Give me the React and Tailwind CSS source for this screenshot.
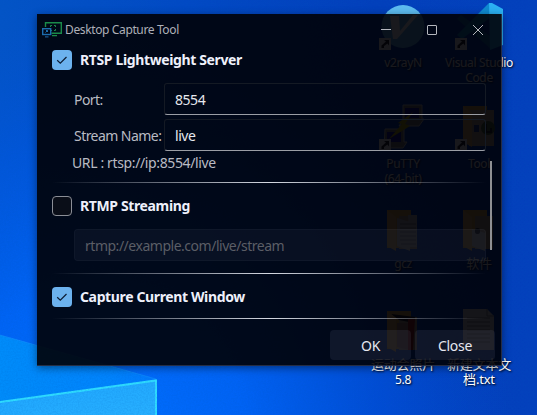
import React, { useState } from "react";

function Wallpaper() {
  return (
    <svg className="absolute inset-0" width="537" height="415" viewBox="0 0 537 415">
      <defs>
        <linearGradient id="sky" x1="0" y1="0" x2="1" y2="0">
          <stop offset="0" stopColor="#0454c6" />
          <stop offset="0.35" stopColor="#0249c4" />
          <stop offset="0.7" stopColor="#033fbb" />
          <stop offset="1" stopColor="#0440bc" />
        </linearGradient>
        <radialGradient id="glow" gradientUnits="userSpaceOnUse" cx="100" cy="430" r="410">
          <stop offset="0" stopColor="#0070ff" />
          <stop offset="0.35" stopColor="#0066fa" stopOpacity="0.9" />
          <stop offset="0.7" stopColor="#0058ea" stopOpacity="0.5" />
          <stop offset="1" stopColor="#0050dc" stopOpacity="0" />
        </radialGradient>
        <linearGradient id="pane" x1="0" y1="0" x2="1" y2="1">
          <stop offset="0" stopColor="#1ea6ff" />
          <stop offset="1" stopColor="#28b0ff" />
        </linearGradient>
        <linearGradient id="beam" gradientUnits="userSpaceOnUse" x1="0" y1="0" x2="180" y2="0">
          <stop offset="0" stopColor="#008cfa" />
          <stop offset="0.6" stopColor="#0084fd" />
          <stop offset="1" stopColor="#0074ff" />
        </linearGradient>
        <filter id="grain" x="0" y="0" width="100%" height="100%">
          <feTurbulence type="fractalNoise" baseFrequency="0.6" numOctaves="2" />
          <feColorMatrix values="0 0 0 0 0  0 0 0 0 0.1  0 0 0 0 0.5  0.6 0 0 0 -0.200" />
        </filter>
      </defs>
      <rect width="537" height="415" fill="url(#sky)" />
      <rect width="537" height="415" fill="url(#glow)" />
      <path d="M0 335 L156 379 V415 H0 Z" fill="url(#beam)" />
      <path d="M0 335 L156 379" stroke="#1492ff" strokeOpacity="0.6" strokeWidth="1" />
      <path d="M0 402 L157 380 V415 H0 Z" fill="url(#pane)" />
      <path d="M0 402 L156 380.500 V415" fill="none" stroke="#2fdcff" strokeWidth="2" />
      <rect width="537" height="415" filter="url(#grain)" opacity="0.45" />
    </svg>
  );
}

function Shortcut() {
  return (
    <g>
      <rect x="0" y="35" width="12" height="12" fill="#f0f0f0" />
      <path d="M2.500 45 V42.500 L7 38.500 L5 37 H10 V42.500 L8.500 40.500 L5 43 V45 Z" fill="#222" />
    </g>
  );
}

function Folder({ children }) {
  return (
    <g>
      <path d="M8 2 H32 V40 H8 Z" fill="#d9a441" />
      <path d="M20 8 H38 V41 H20 Z" fill="#ad9a7c" />
      {children}
      <path d="M8 2 L17 9 V43 L8 38 Z" fill="#e0b258" />
    </g>
  );
}

// desktop items, placed on the free canvas of the desktop
const items = [
  {
    x: 379, y: 3, lines: ["v2rayN"],
    art: (
      <g>
        <circle cx="24" cy="23.500" r="21.500" fill="#5dbcf0" />
        <path d="M11 13 H20 L21 28 L34 12 H39 L18 36 H14 Z" fill="#fff" />
        <Shortcut />
      </g>
    ),
  },
  {
    x: 455, y: 3, lines: ["Visual Studio", "Code"],
    art: (
      <g>
        <path d="M2 16 L6 12 L36 34 V46 Z" fill="#0a6fb8" />
        <path d="M2 32 L34 0 L36 14 L7 36 Z" fill="#0f8ad0" />
        <path d="M34 0 L37 0 L48 6 V42 L35 47 Z" fill="#2bb0f2" />
        <Shortcut />
      </g>
    ),
  },
  {
    x: 379, y: 104, lines: ["PuTTY", "(64-bit)"],
    art: (
      <g>
        <path d="M24 1 H43 V15 H45 L40 22 H20 L24 16 Z" fill="#77776f" stroke="#c8c8c0" />
        <path d="M26 4 H40 V14 H26 Z" fill="#1515a0" />
        <path d="M6 25 H25 V38 H28 L24 44 H5 Z" fill="#77776f" stroke="#c8c8c0" />
        <path d="M8 28 H22 V38 H8 Z" fill="#1515a0" />
        <path d="M34 8 L19 19 L23 20 L10 35 L31 22 L26 20 Z" fill="#b8ae00" />
        <Shortcut />
      </g>
    ),
  },
  {
    x: 455, y: 104, lines: ["Tool"],
    art: (
      <g>
        <Folder>
          <path d="M14 6 H39 V42 H14 Z" fill="#b7a584" />
          <circle cx="33" cy="24" r="7" fill="#49662f" />
          <rect x="19" y="21" width="5" height="7" fill="#203a90" />
          <path d="M31 20 V28 H36 V24" fill="none" stroke="#222" strokeWidth="2" />
        </Folder>
        <Shortcut />
      </g>
    ),
  },
  {
    x: 379, y: 208, lines: ["gcz"], tight: true,
    art: (
      <Folder>
        <path d="M18 10 L31 14 V43 L18 38 Z M29 7 H38 V39 H31 Z" fill="#b8b8b8" />
        <path d="M21 16 H37 M21 20 H37 M21 24 H37 M21 28 H37 M21 32 H37 M22 36 H37" stroke="#808080" />
      </Folder>
    ),
  },
  {
    x: 455, y: 208, lines: ["软件"], tight: true,
    art: (
      <Folder>
        <path d="M17 21 L30 25 V43 L17 38 Z" fill="#c6c6c6" />
        <rect x="20" y="20" width="5" height="6" rx="2" fill="#333" />
      </Folder>
    ),
  },
  {
    x: 379, y: 309, lines: ["运动会照片", "5.8"], tight: true,
    art: (
      <Folder>
        <path d="M12 5 L36 8 L35 14 L20 11 Z" fill="#111" />
        <path d="M18 14 H30 V41 L18 38 Z" fill="#a77f6a" />
        <path d="M29 10 H36 L34 41 H29 Z" fill="#a02218" />
      </Folder>
    ),
  },
  {
    x: 455, y: 309, lines: ["新建文本文", "档.txt"], tight: true,
    art: (
      <g>
        <path d="M8 0 H32 L39 7 V41 H8 Z" fill="#d8d8d8" />
        <path d="M32 0 V7 H39" fill="none" stroke="#888" />
        <path d="M12 9 H35 M12 13 H35 M12 17 H35 M12 21 H35 M12 25 H35 M12 29 H35 M12 33 H35" stroke="#888" />
      </g>
    ),
  },
];

function DesktopIcon({ item }) {
  return (
    <div
      className="absolute flex w-[88px] flex-col items-center text-[12px] leading-[15px] text-white [text-shadow:1px_1px_2px_#000]"
      style={{ left: item.x - 20, top: item.y }}
    >
      <svg width="48" height="48" viewBox="0 0 48 48">
        {item.art}
      </svg>
      <div className={`text-center ${item.tight ? "mt-0" : "mt-1"}`}>
        {item.lines.map((line) => (
          <div
            key={line}
            className={`whitespace-nowrap ${/^[\x20-\x7e]+$/.test(line) ? "tracking-[-0.350px]" : "text-[13px] tracking-[-0.200px]"}`}
          >
            {line}
          </div>
        ))}
      </div>
    </div>
  );
}

function AppIcon() {
  return (
    <svg width="20" height="16" viewBox="0 0 20 16" fill="none">
      <path d="M3.500 5 V0.700 H19.300 V11.300 H9.500" stroke="#1a8a4a" strokeWidth="1.400" />
      <path d="M8.500 5 V3.500 H10 M12 3.500 H13.500 V5 M13.500 7 V8.500 H12 M10 8.500 H9" stroke="#1a8a4a" />
      <path d="M10 13.600 H15" stroke="#1a8a4a" strokeWidth="1.300" />
      <rect x="0.700" y="6.700" width="8" height="5.800" stroke="#1c6cae" strokeWidth="1.400" />
      <path d="M3.500 10.500 L5.500 8.500 M4 8.500 H5.500 V10 M3 14.900 H6.500" stroke="#1c6cae" />
    </svg>
  );
}

function Check({ label, checked, onChange }) {
  return (
    <button onClick={onChange} className="flex h-5 items-center gap-2">
      <span
        className={`flex h-5 w-5 items-center justify-center rounded ${
          checked ? "bg-[#6cb2ee]" : "border border-[#8b8e96] bg-[#0a0e18]"
        }`}
      >
        {checked && (
          <svg width="12" height="10" viewBox="0 0 12 10" fill="none">
            <path d="M1.200 5.200 L4.300 8.200 L10.500 2" stroke="#0c1c33" strokeWidth="1.200" />
          </svg>
        )}
      </span>
      <span className="relative -top-px whitespace-nowrap text-[14px] font-bold tracking-[-0.370px] text-[#eef0fb]">
        {label}
      </span>
    </button>
  );
}

function Field({ label, value, onChange }) {
  return (
    <label className="flex h-8 items-center">
      <span className="w-[90px] shrink-0 whitespace-nowrap pt-px text-[14px] tracking-[-0.550px] text-[#b9bbc3]">
        {label}
      </span>
      <input
        value={value}
        onChange={onChange}
        className="h-8 min-w-0 flex-1 rounded-[3px] border border-[#141a24] border-b-[#9b9ea5] bg-transparent px-2.5 text-[14px] tracking-[-0.450px] text-[#e6e8ee] outline-none"
      />
    </label>
  );
}

function Divider() {
  return <div className="h-px bg-linear-to-r from-transparent via-[#d5d9e2] to-transparent" />;
}

function App() {
  const [rtsp, setRtsp] = useState(true);
  const [rtmp, setRtmp] = useState(false);
  const [capture, setCapture] = useState(true);
  const [port, setPort] = useState("8554");
  const [stream, setStream] = useState("live");

  return (
    <div className="relative h-[415px] w-[537px] overflow-hidden font-['Noto_Sans','Noto_Sans_CJK_SC',sans-serif]">
      <Wallpaper />
      {items.map((item) => (
        <DesktopIcon key={item.lines[0]} item={item} />
      ))}

      {/* Window */}
      <div className="absolute left-[37px] top-[14px] flex h-[352px] w-[465px] flex-col border-b border-r border-[#49527080] bg-[#000004]/90 shadow-[0_2px_8px_rgba(0,0,0,0.45)]">
        <div className="flex h-8 shrink-0 items-center pl-[5px] text-[#aeb0b8]">
          <AppIcon />
          <span className="ml-[3px] text-[12px] tracking-[-0.370px]">Desktop Capture Tool</span>
          <div className="ml-auto flex items-center gap-9 pr-[18px]">
            <svg width="10" height="10" viewBox="0 0 10 10">
              <path d="M0 4.500 H10" stroke="#b4b6bd" />
            </svg>
            <svg width="10" height="10" viewBox="0 0 10 10" fill="none">
              <rect x="0.500" y="0.500" width="9" height="9" rx="0.500" stroke="#b4b6bd" />
            </svg>
            <svg width="10" height="10" viewBox="0 0 10 10">
              <path d="M0 0 L10 10 M10 0 L0 10" stroke="#b4b6bd" />
            </svg>
          </div>
        </div>

        <div className="flex flex-1">
          <div className="w-[449px] pl-[15px] pt-1">
            <Check label="RTSP Lightweight Server" checked={rtsp} onChange={() => setRtsp(!rtsp)} />
            <div className="mt-[13px] flex flex-col gap-1 pl-[22px]">
              <Field label="Port:" value={port} onChange={(e) => setPort(e.target.value)} />
              <Field label="Stream Name:" value={stream} onChange={(e) => setStream(e.target.value)} />
            </div>
            <div className="mb-[9px] mt-[2px] h-5 pl-5 text-[14px] leading-5 tracking-[-0.370px] text-[#b9bbc3]">
              URL : rtsp://ip:{port}/{stream}
            </div>
            <Divider />
            <div className="pt-[13px]">
              <Check label="RTMP Streaming" checked={rtmp} onChange={() => setRtmp(!rtmp)} />
            </div>
            <div className="mb-3 mt-[13px] pl-[22px]">
              <input
                disabled={!rtmp}
                placeholder="rtmp://example.com/live/stream"
                className="h-8 w-full rounded border border-white/3 bg-[#a0b0e0]/5 px-2.5 text-[14px] tracking-[-0.480px] outline-none placeholder:text-[#5b5e66]"
              />
            </div>
            <Divider />
            <div className="pb-[11px] pt-[13px]">
              <Check label="Capture Current Window" checked={capture} onChange={() => setCapture(!capture)} />
            </div>
            <Divider />
          </div>
          <div className="ml-1 mt-[115px] h-[89px] w-0.5 bg-[#8e8f93]" />
        </div>

        <div className="flex shrink-0 justify-end gap-1 pb-[5px] pr-1.5 text-[14px] tracking-[-0.300px] text-[#e6e8f0]">
          <button className="h-[30px] w-[81px] rounded bg-[#8fa0c8]/10">OK</button>
          <button className="h-[30px] w-20 rounded bg-[#8fa0c8]/10">Close</button>
        </div>
      </div>
    </div>
  );
}

export default App;
